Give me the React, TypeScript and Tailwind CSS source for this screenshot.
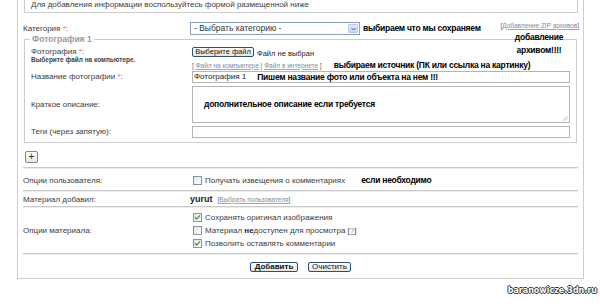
import React from 'react';

const Req = () => <span className="text-[#e46b6b]">*</span>;

const Note: React.FC<{ children: React.ReactNode; className?: string }> = ({ children, className = '' }) => (
  <span className={`font-bold text-[8.5px] tracking-[-0.25px] text-black whitespace-nowrap ${className}`}>{children}</span>
);

const Link: React.FC<{ children: React.ReactNode }> = ({ children }) => (
  <a className="underline text-[#7d8ca0] decoration-[#9aa6b5]">{children}</a>
);

const Checkbox: React.FC<{ checked?: boolean }> = ({ checked }) => (
  <span className="flex items-center justify-center w-[9px] h-[9px] border border-[#8493a8] bg-linear-to-br from-[#e4e4dc] to-white shrink-0">
    {checked && (
      <svg viewBox="0 0 8 8" className="w-[7px] h-[7px]">
        <path d="M1.2 3.8 L3.1 5.8 L6.9 1.6" fill="none" stroke="#2aa52a" strokeWidth="1.5" />
      </svg>
    )}
  </span>
);

const XpButton: React.FC<{ children: React.ReactNode; className?: string }> = ({ children, className = '' }) => (
  <span
    className={`flex items-center justify-center h-[10px] border border-[#2a4f7a] rounded-[2px] bg-linear-to-b from-white to-[#e6e5dc] text-[#111] leading-none ${className}`}
  >
    {children}
  </span>
);

const Separator = () => <div className="h-[2px] border-t border-[#c9c9c9] bg-[#ececec]" />;

export default function App() {
  return (
    <div className="relative w-[600px] h-[306px] overflow-hidden bg-white font-['Liberation_Sans',Arial,sans-serif] text-[8px] text-[#3c3c3c]">
      <div className="ml-[17px] w-[567px] border-x border-b border-[#cdcdcd] px-[5px] pb-[6px] flex flex-col">
        {/* info */}
        <div className="ml-[1px] h-[13px] border-x border-b border-[#cdcdcd] pl-[6px] leading-[9px]">
          Для добавления информации воспользуйтесь формой размещенной ниже
        </div>

        {/* category */}
        <div className="mt-[9px] h-[13px] flex items-center">
          <div className="w-[167px]">
            Категория <Req />:
          </div>
          <div className="w-[170px] h-[13px] border border-[#8aa1bf] flex bg-white">
            <span className="flex-1 pl-[3px] flex items-center text-[8.5px] text-[#333]">- Выбрать категорию -</span>
            <span className="w-[10px] m-[1px] flex items-center justify-center bg-linear-to-b from-[#e3ecfb] to-[#c4d5f3] border border-[#b8c9ea] rounded-[1px]">
              <svg viewBox="0 0 6 4" className="w-[5px] h-[4px]">
                <path d="M0.6 0.8 L3 3.2 L5.4 0.8" fill="none" stroke="#4d6185" strokeWidth="1.2" />
              </svg>
            </span>
          </div>
          <Note className="ml-[3px]">выбираем что мы сохраняем</Note>
          <span className="ml-auto mr-[-1px] mb-[6px] text-[6.5px] text-[#666]">
            [<Link>Добавление ZIP архивов</Link>]
          </span>
        </div>

        {/* photo fieldset */}
        <fieldset className="mx-[1px] border border-[#cdcdcd] px-[6px] pb-[4px]">
          <legend className="ml-[-1px] px-[2px] font-bold text-[#9b9b9b] text-[8.5px] leading-[9px]">Фотография 1</legend>

          <div className="flex pt-[3px]">
            <div className="w-[161px]">
              <div className="leading-[9px]">
                Фотография <Req />:
              </div>
              <div className="font-bold text-[6.5px] leading-[7px] text-[#444]">Выберите файл на компьютере.</div>
            </div>
            <div className="flex-1">
              <div className="flex items-end h-[10px]">
                <XpButton className="w-[62px] text-[7.5px]">Выберите файл</XpButton>
                <span className="ml-[3px] text-[7.5px] leading-[7px] text-[#222]">Файл не выбран</span>
              </div>
              <div className="mt-[4px] h-[9px] flex items-center">
                <span className="text-[6.5px] text-[#666]">
                  [ <Link>Файл на компьютере</Link> | <Link>Файл в интернете</Link> ]
                </span>
                <Note className="ml-[12px]">выбираем источник (ПК или ссылка на картинку)</Note>
              </div>
            </div>
          </div>

          <div className="mt-[1px] h-[12px] flex items-center">
            <div className="w-[161px]">
              Название фотографии <Req />:
            </div>
            <div className="flex-1 h-[12px] border border-[#b4b4b4] flex items-center pl-[1px]">
              <span className="text-[#222]">Фотография 1</span>
              <Note className="ml-[11px]">Пишем название фото или объекта на нем !!!</Note>
            </div>
          </div>

          <div className="mt-[3px] h-[37px] flex items-center">
            <div className="w-[161px]">Краткое описание:</div>
            <div className="relative flex-1 h-[37px] border border-[#b4b4b4] flex items-center pl-[11px]">
              <Note>дополнительное описание если требуется</Note>
              <svg viewBox="0 0 6 6" className="absolute right-[1px] bottom-[1px] w-[6px] h-[6px]">
                <path d="M5.5 1 L1 5.5 M5.5 3.5 L3.5 5.5" stroke="#aaa" strokeWidth="0.8" />
              </svg>
            </div>
          </div>

          <div className="mt-[3px] h-[12px] flex items-center">
            <div className="w-[161px]">Теги (через запятую):</div>
            <div className="flex-1 h-[12px] border border-[#b4b4b4]" />
          </div>
        </fieldset>

        {/* add photo */}
        <div className="mt-[8px] ml-[2px] w-[13px] h-[12px] border border-[#7c8795] rounded-[2px] bg-linear-to-b from-white to-[#e6e6e0] flex items-center justify-center text-[10px] leading-none text-[#333]">
          +
        </div>

        <div className="mt-[4px]">
          <Separator />
        </div>

        <div className="h-[21px] flex items-center pt-[2px]">
          <div className="w-[167px]">Опции пользователя:</div>
          <div className="ml-[3px] flex items-center">
            <Checkbox />
            <span className="ml-[3px]">Получать извещения о комментариях</span>
            <Note className="ml-[16px]">если необходимо</Note>
          </div>
        </div>
        <Separator />

        <div className="h-[14px] flex items-center pt-[1px]">
          <div className="w-[167px]">Материал добавил:</div>
          <span className="font-bold text-[9px] text-[#222]">yurut</span>
          <span className="ml-[5px] text-[6.5px] text-[#666]">
            [<Link>Выбрать пользователя</Link>]
          </span>
        </div>
        <Separator />

        <div className="h-[45px] flex items-center">
          <div className="w-[167px]">Опции материала:</div>
          <div className="ml-[3px] flex flex-col">
            <div className="h-[13px] flex items-center">
              <Checkbox checked />
              <span className="ml-[3px]">Сохранять оригинал изображения</span>
            </div>
            <div className="h-[13px] flex items-center">
              <Checkbox />
              <span className="ml-[3px]">
                Материал <b className="text-[#222]">не</b>доступен для просмотра [<Link>?</Link>]
              </span>
            </div>
            <div className="h-[13px] flex items-center">
              <Checkbox checked />
              <span className="ml-[3px]">Позволить оставлять комментарии</span>
            </div>
          </div>
        </div>
        <Separator />

        <div className="mt-[7px] flex justify-center gap-[10px]">
          <XpButton className="w-[48px] font-bold text-[8px]">Добавить</XpButton>
          <XpButton className="w-[43px] text-[8px]">Очистить</XpButton>
        </div>
      </div>

      <span className="absolute right-[3px] bottom-[9px] font-['DejaVu_Sans',sans-serif] font-bold text-[8px] text-white [text-shadow:1px_0_0_#333,-1px_0_0_#333,0_1px_0_#333,0_-1px_0_#333]">
        baranowicze.3dn.ru
      </span>

      {/* annotation over the fieldset corner */}
      <div className="absolute left-[513px] top-[31px] w-[52px] text-center font-bold text-[8.5px] tracking-[-0.25px] leading-[13px] text-black">
        добавление
        <br />
        архивом!!!!
      </div>
    </div>
  );
}
